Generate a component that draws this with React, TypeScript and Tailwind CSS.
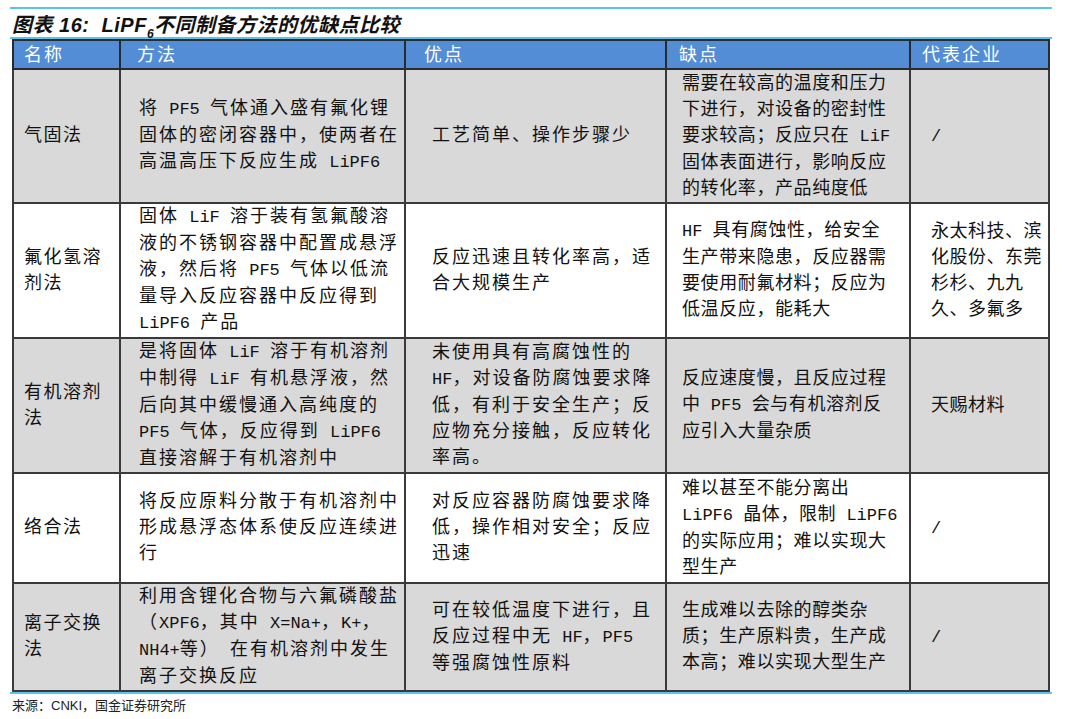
import React from 'react'

const cellFont = {
  fontFamily: '"Liberation Mono", "Noto Sans CJK SC", sans-serif',
}

interface Row {
  height: string
  gray: boolean
  cells: string[][]
}

const rows: Row[] = [
  {
    height: 'h-[134px]',
    gray: true,
    cells: [
      ['气固法'],
      ['将 PF5 气体通入盛有氟化锂', '固体的密闭容器中，使两者在', '高温高压下反应生成 LiPF6'],
      ['工艺简单、操作步骤少'],
      ['需要在较高的温度和压力', '下进行，对设备的密封性', '要求较高；反应只在 LiF', '固体表面进行，影响反应', '的转化率，产品纯度低'],
      ['/'],
    ],
  },
  {
    height: 'h-[135px]',
    gray: false,
    cells: [
      ['氟化氢溶', '剂法'],
      ['固体 LiF 溶于装有氢氟酸溶', '液的不锈钢容器中配置成悬浮', '液，然后将 PF5 气体以低流', '量导入反应容器中反应得到', 'LiPF6 产品'],
      ['反应迅速且转化率高，适', '合大规模生产'],
      ['HF 具有腐蚀性，给安全', '生产带来隐患，反应器需', '要使用耐氟材料；反应为', '低温反应，能耗大'],
      ['永太科技、滨', '化股份、东莞', '杉杉、九九', '久、多氟多'],
    ],
  },
  {
    height: 'h-[134px]',
    gray: true,
    cells: [
      ['有机溶剂', '法'],
      ['是将固体 LiF 溶于有机溶剂', '中制得 LiF 有机悬浮液，然', '后向其中缓慢通入高纯度的', 'PF5 气体，反应得到 LiPF6', '直接溶解于有机溶剂中'],
      ['未使用具有高腐蚀性的', 'HF，对设备防腐蚀要求降', '低，有利于安全生产；反', '应物充分接触，反应转化', '率高。'],
      ['反应速度慢，且反应过程', '中 PF5 会与有机溶剂反', '应引入大量杂质'],
      ['天赐材料'],
    ],
  },
  {
    height: 'h-[110px]',
    gray: false,
    cells: [
      ['络合法'],
      ['将反应原料分散于有机溶剂中', '形成悬浮态体系使反应连续进', '行'],
      ['对反应容器防腐蚀要求降', '低，操作相对安全；反应', '迅速'],
      ['难以甚至不能分离出', 'LiPF6 晶体，限制 LiPF6', '的实际应用；难以实现大', '型生产'],
      ['/'],
    ],
  },
  {
    height: 'h-[108px]',
    gray: true,
    cells: [
      ['离子交换', '法'],
      ['利用含锂化合物与六氟磷酸盐', '（XPF6，其中 X=Na+，K+，', 'NH4+等） 在有机溶剂中发生', '离子交换反应'],
      ['可在较低温度下进行，且', '反应过程中无 HF，PF5', '等强腐蚀性原料'],
      ['生成难以去除的醇类杂', '质；生产原料贵，生产成', '本高；难以实现大型生产'],
      ['/'],
    ],
  },
]

const headers = ['名称', '方法', '优点', '缺点', '代表企业']
const headPad = ['pl-[10px]', 'pl-[16px]', 'pl-[18px]', 'pl-[12px]', 'pl-[11px]']
const cellPad = [
  'pl-[10px] tracking-[1.5px]',
  'pl-[18px] tracking-[2px]',
  'pl-[26px] tracking-[2px]',
  'pl-[15px] tracking-[0.6px]',
  'pl-[20px] tracking-[0.5px]',
]

// latin runs are half width in the source, so drop the extra tracking there
function Line({ text }: { text: string }) {
  const parts = text.split(/([\x20-\x7e]+)/).filter(Boolean)
  return (
    <div className="whitespace-nowrap">
      {parts.map((p, i) =>
        /^[\x20-\x7e]+$/.test(p) ? (
          <span key={i} className="text-[17px] tracking-normal">
            {p}
          </span>
        ) : (
          <span key={i}>{p}</span>
        )
      )}
    </div>
  )
}

export default function App() {
  return (
    <div className="w-[1078px] h-[719px] bg-white text-[#111] overflow-hidden">
      <div className="pt-[7px] pl-[10px]">
        <div className="w-[1042px] h-[2px] bg-[#5cc2ee]" />

        {/* Title */}
        <div
          className="pl-[2px] pt-[3px] h-[28px] text-[20px] leading-[26px] font-bold italic whitespace-nowrap tracking-[0.5px]"
          style={{ fontFamily: '"Liberation Sans", "Noto Sans CJK SC", sans-serif' }}
        >
          图表 16:&nbsp; LiPF<sub className="text-[12px] align-[-3px]">6</sub>不同制备方法的优缺点比较
        </div>

        <div className="w-[1042px] h-[2px] bg-[#5cc2ee]" />

        <div className="pl-[2px]">
          <table className="table-fixed border-collapse w-[1036px]" style={cellFont}>
            <colgroup>
              <col className="w-[107px]" />
              <col className="w-[285px]" />
              <col className="w-[261px]" />
              <col className="w-[244px]" />
              <col className="w-[139px]" />
            </colgroup>
            <thead>
              <tr className="h-[28px] bg-[#538dd5]">
                {headers.map((h, i) => (
                  <th
                    key={h}
                    className={`border-2 border-[#2b2b2b] text-left font-normal text-white text-[18px] leading-[24px] tracking-[2px] p-0 pt-[3px] ${headPad[i]}`}
                  >
                    {h}
                  </th>
                ))}
              </tr>
            </thead>
            <tbody>
              {rows.map((row, ri) => (
                <tr key={ri} className={`${row.height} ${row.gray ? 'bg-[#d9d9d9]' : 'bg-white'}`}>
                  {row.cells.map((lines, ci) => (
                    <td
                      key={ci}
                      className={`border-2 border-[#3a3a3a] align-middle p-0 text-[18px] leading-[26px] ${cellPad[ci]}`}
                    >
                      {lines.map((l, li) => (
                        <Line key={li} text={l} />
                      ))}
                    </td>
                  ))}
                </tr>
              ))}
            </tbody>
          </table>
        </div>

        <div className="w-[1042px] h-[2px] bg-[#5cc2ee]" />

        {/* Source */}
        <div
          className="pl-[2px] pt-[3px] text-[13px] leading-[18px] text-[#222]"
          style={{ fontFamily: '"Liberation Sans", "Noto Sans CJK SC", sans-serif' }}
        >
          来源：CNKI，国金证券研究所
        </div>
      </div>
    </div>
  )
}
